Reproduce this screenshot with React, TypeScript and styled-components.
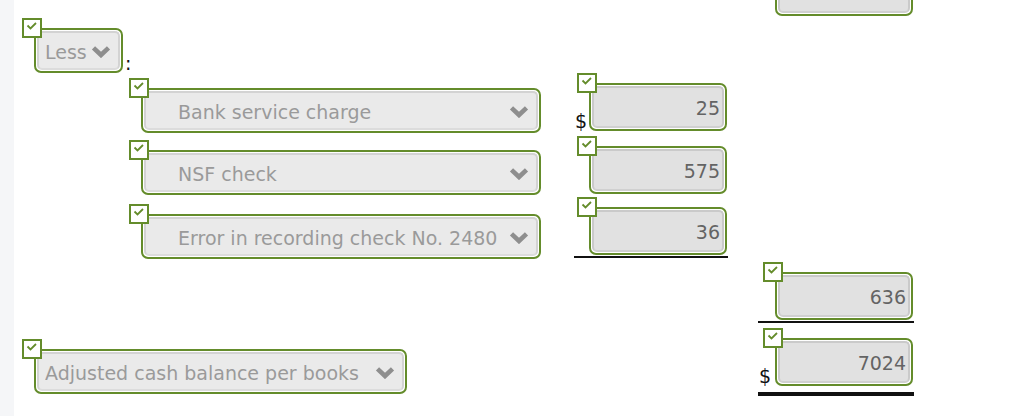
import React from "react";
import styled, { createGlobalStyle } from "styled-components";

/* tokens */
const color = {
  green: "#648c2b",
  gutter: "#f5f6f8",
  selectBg: "#eaeaea",
  selectLine: "#d3d3d3",
  selectText: "#9a9a9a",
  inputBg: "#e1e1e1",
  inputLine: "#cacaca",
  inputText: "#646464",
  chevron: "#8e8e8e",
  ink: "#111111",
};

const GlobalStyle = createGlobalStyle`
  html, body {
    margin: 0;
    padding: 0;
    overflow: hidden;
    background: #ffffff;
  }
  body {
    font-family: "DejaVu Sans", Verdana, sans-serif;
    font-size: 19px;
  }
`;

const Page = styled.div`
  display: flex;
  width: 1022px;
  height: 416px;
  overflow: hidden;
`;

const Gutter = styled.div`
  width: 14px;
  flex: none;
  background: ${color.gutter};
`;

const Sheet = styled.div`
  flex: 1;
  margin-top: -36px;
`;

/* one line of the worksheet: label | amount | total */
const Row = styled.div<{ $h: number }>`
  display: grid;
  grid-template-columns: 530px 154px 156px;
  column-gap: 30px;
  height: ${(p) => p.$h}px;
`;

const LabelCell = styled.div<{ $indent: number; $top: number }>`
  display: flex;
  align-items: flex-start;
  padding-left: ${(p) => p.$indent}px;
  padding-top: ${(p) => p.$top}px;
`;

const AmountCell = styled.div<{
  $top: number;
  $rule?: "single" | "double";
}>`
  align-self: start;
  display: flex;
  justify-content: space-between;
  margin-top: ${(p) => p.$top}px;
  padding-right: 1px;
  padding-bottom: ${(p) => (p.$rule === "double" ? 6 : p.$rule ? 1 : 0)}px;
  border-bottom: ${(p) =>
    p.$rule === "double"
      ? `4px solid ${color.ink}`
      : p.$rule
      ? `2px solid ${color.ink}`
      : "none"};
`;

const Dollar = styled.span`
  align-self: flex-end;
  font-size: 19px;
  line-height: 19px;
  color: ${color.ink};
  padding-left: 1px;
`;

const Colon = styled.span`
  align-self: flex-start;
  margin-top: 26px;
  margin-left: 2px;
  font-size: 19px;
  line-height: 19px;
  color: ${color.ink};
`;

/* green "checked" frame around a field */
const Frame = styled.div<{ $w: number; $h: number }>`
  position: relative;
  display: flex;
  box-sizing: border-box;
  width: ${(p) => p.$w}px;
  height: ${(p) => p.$h}px;
  padding: 1px;
  border: 2px solid ${color.green};
  border-radius: 7px;
  background: #ffffff;
`;

const Check = styled.span`
  position: absolute;
  left: -14px;
  top: -12px;
  z-index: 2;
  width: 20px;
  height: 20px;
  box-sizing: border-box;
  border: 2px solid ${color.green};
  background: #ffffff;
  display: flex;
  align-items: center;
  justify-content: center;

  svg {
    display: block;
  }
`;

const SelectBox = styled.div<{ $indent: number }>`
  flex: 1;
  display: flex;
  align-items: center;
  min-width: 0;
  padding: 2px 7px 0 ${(p) => p.$indent}px;
  border: 2px solid ${color.selectLine};
  border-bottom-color: #dcdcdc;
  border-radius: 5px;
  background: ${color.selectBg};
  color: ${color.selectText};
  font-size: 19px;
`;

const SelectText = styled.span`
  flex: 1;
  min-width: 0;
  white-space: nowrap;
  overflow: hidden;
`;

const Chevron = styled.svg`
  flex: none;
  margin-left: 4px;
  margin-top: -1px;
`;

const InputBox = styled.div`
  flex: 1;
  display: flex;
  align-items: center;
  justify-content: flex-end;
  padding: 2px 2px 0 0;
  border: 2px solid ${color.inputLine};
  border-bottom-color: #d0d0d0;
  border-radius: 5px;
  background: ${color.inputBg};
  color: ${color.inputText};
  font-size: 19px;
`;

const CheckMark = () => (
  <Check>
    <svg width="16" height="16" viewBox="0 0 16 16">
      <polyline
        points="3.5,5.5 6.5,8.5 12,3"
        fill="none"
        stroke={color.green}
        strokeWidth="1.8"
      />
    </svg>
  </Check>
);

type SelectProps = { label: string; width: number; indent?: number };

const Select: React.FC<SelectProps> = ({ label, width, indent = 6 }) => (
  <Frame $w={width} $h={45}>
    <CheckMark />
    <SelectBox $indent={indent}>
      <SelectText>{label}</SelectText>
      <Chevron width="20" height="13" viewBox="0 0 20 13">
        <polyline
          points="2.5,2.8 10,10 17.5,2.8"
          fill="none"
          stroke={color.chevron}
          strokeWidth="4.6"
        />
      </Chevron>
    </SelectBox>
  </Frame>
);

const Amount: React.FC<{ value: string }> = ({ value }) => (
  <Frame $w={138} $h={48}>
    <CheckMark />
    <InputBox>{value}</InputBox>
  </Frame>
);

const App: React.FC = () => {
  const items = [
    { label: "Bank service charge", value: "25", dollar: true, h: 63, top: 12, amtTop: 7 },
    { label: "NSF check", value: "575", h: 63, top: 11, amtTop: 7 },
    { label: "Error in recording check No. 2480", value: "36", h: 62, top: 12, amtTop: 5, rule: true },
  ];

  return (
    <>
      <GlobalStyle />
      <Page>
        <Gutter />
        <Sheet>
          <Row $h={56}>
            <div />
            <div />
            <AmountCell $top={4}>
              <Dollar />
              <Amount value="7660" />
            </AmountCell>
          </Row>

          <Row $h={56}>
            <LabelCell $indent={20} $top={8}>
              <Select label="Less" width={89} />
              <Colon>:</Colon>
            </LabelCell>
          </Row>

          {items.map((it) => (
            <Row key={it.label} $h={it.h}>
              <LabelCell $indent={127} $top={it.top}>
                <Select label={it.label} width={400} indent={32} />
              </LabelCell>
              <AmountCell $top={it.amtTop} $rule={it.rule ? "single" : undefined}>
                <Dollar>{it.dollar ? "$" : ""}</Dollar>
                <Amount value={it.value} />
              </AmountCell>
              <div />
            </Row>
          ))}

          <Row $h={66}>
            <div />
            <div />
            <AmountCell $top={8} $rule="single">
              <Dollar />
              <Amount value="636" />
            </AmountCell>
          </Row>

          <Row $h={86}>
            <LabelCell $indent={20} $top={19}>
              <Select label="Adjusted cash balance per books" width={373} />
            </LabelCell>
            <div />
            <AmountCell $top={8} $rule="double">
              <Dollar>$</Dollar>
              <Amount value="7024" />
            </AmountCell>
          </Row>
        </Sheet>
      </Page>
    </>
  );
};

export default App;
